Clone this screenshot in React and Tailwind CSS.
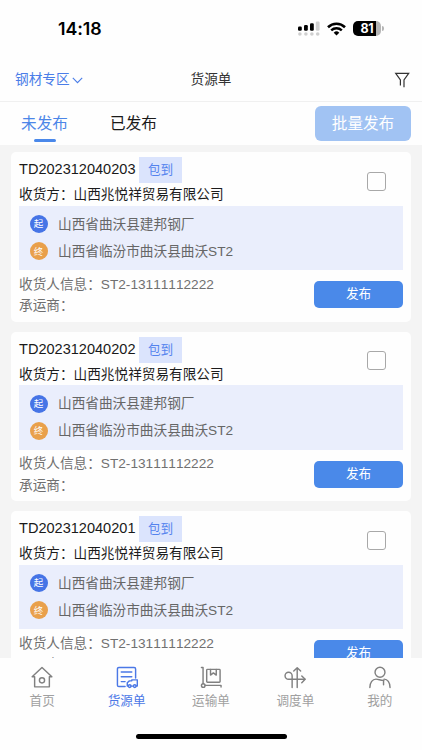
import React, { useState } from "react";

const orders = [
  { id: "TD202312040203" },
  { id: "TD202312040202" },
  { id: "TD202312040201" },
];

function StatusBar() {
  return (
    <div className="h-[58px] shrink-0 flex items-start justify-between pl-[58px] pr-[38px] pt-[20px]">
      <span className="font-['Inter'] font-semibold text-[17.8px] leading-[18px] tracking-[-0.1px] text-black">
        14:18
      </span>
      <div className="flex items-center h-[17px]">
        <svg width="22" height="15" viewBox="0 0 22 15">
          <g fill="#000">
            <rect x="0" y="5.5" width="3.8" height="4.3" rx="1.2" />
            <rect x="6" y="4" width="3.8" height="5.8" rx="1.2" />
            <rect x="12" y="2.2" width="3.8" height="7.6" rx="1.2" />
          </g>
          <g fill="#cfcfcf">
            <rect x="17.8" y="0.6" width="3.8" height="9.2" rx="1.2" />
            <circle cx="1.9" cy="13" r="1.8" />
            <circle cx="7.9" cy="13" r="1.8" />
            <circle cx="13.9" cy="13" r="1.8" />
            <circle cx="19.7" cy="13" r="1.8" />
          </g>
        </svg>
        <svg className="ml-[7px]" width="19" height="14" viewBox="0 0 19 14" fill="none" stroke="#000">
          <path d="M1 5.2a12.2 12.2 0 0 1 17 0" strokeWidth="2.6" />
          <path d="M4.2 8.4a7.6 7.6 0 0 1 10.6 0" strokeWidth="2.4" />
          <path d="M9.5 13.6 6.7 10.7a4 4 0 0 1 5.6 0z" fill="#000" stroke="none" />
        </svg>
        <div className="ml-[7px] w-[28px] h-[15px] rounded-[5px] bg-[linear-gradient(to_right,#000_83%,#b5b5b5_83%)] text-white font-['Inter'] font-bold text-[12.5px] leading-[15px] tracking-[-0.3px] text-center">
          81
        </div>
        <div className="ml-[1px] w-[2px] h-[5px] rounded-r-full bg-[#b5b5b5]" />
      </div>
    </div>
  );
}

function Header() {
  return (
    <div className="h-[44px] shrink-0 grid grid-cols-3 items-center border-b border-[#f0f0f0] pl-[12px] pr-[12px] text-[13.65px]">
      <div className="flex items-center pl-[3px] pt-[2px] text-[#4a7de8]">
        钢材专区
        <svg className="ml-[2px]" width="11" height="7" viewBox="0 0 11 7" fill="none" stroke="currentColor" strokeWidth="1.1">
          <path d="M0.8 0.8 5.5 5.6 10.2 0.8" />
        </svg>
      </div>
      <div className="text-center pt-[2px] text-[#333]">货源单</div>
      <svg className="justify-self-end" width="16" height="16" viewBox="0 0 16 16" fill="none" stroke="#333" strokeWidth="1.2">
        <path d="M6.4 13.6V8L1.700 1.300h13L10 8v7.300" />
      </svg>
    </div>
  );
}

function Tabs({ active, onChange }) {
  return (
    <div className="h-[43px] shrink-0 flex items-center justify-between pr-[11px]">
      <div className="flex h-full">
        {["未发布", "已发布"].map((name, index) => (
          <button
            key={name}
            onClick={() => onChange(index)}
            className={`w-[89px] h-full flex flex-col items-center text-[15.6px] leading-[24px] pt-[10px] ${
              active === index ? "text-[#4c86e8]" : "text-[#1a1a1a]"
            }`}
          >
            {name}
            {active === index && (
              <span className="mt-[3px] w-[22px] h-[3px] rounded-full bg-[#4a88ea]" />
            )}
          </button>
        ))}
      </div>
      <button className="w-[96px] h-[35px] rounded-[6px] bg-[#a1c3f3] pt-[1px] text-white text-[15.6px]">
        批量发布
      </button>
    </div>
  );
}

function Place({ mark, name, color }) {
  return (
    <div className="flex items-center h-[27.3px]">
      <span
        className={`w-[18px] h-[18px] rounded-full flex items-center justify-center text-white text-[9.5px] leading-none ${color}`}
      >
        {mark}
      </span>
      <span className="ml-[10.5px] pt-[1.5px]">{name}</span>
    </div>
  );
}

function OrderCard({ order }) {
  return (
    <div className="h-[169.5px] shrink-0 rounded-[5px] bg-[#fefefe] px-[8px] pt-[5px] text-[13.65px]">
      <div className="flex justify-between pr-[17.5px] h-[48.5px]">
        <div>
          <div className="flex items-start">
            <span className="w-[120px] text-[14.55px] leading-[24px] text-[#1a1a1a]">{order.id}</span>
            <span className="w-[43px] h-[26px] bg-[#dbe4fd] text-[#5583ee] text-[12.6px] leading-[27px] text-center">
              包到
            </span>
          </div>
          <div className="leading-[24px] text-[#1c1c1c]">收货方：山西兆悦祥贸易有限公司</div>
        </div>
        <span className="mt-[14.5px] w-[19px] h-[19px] rounded-[3px] border border-[#a8a8a8]" />
      </div>
      <div className="h-[64.5px] bg-[#eaeefc] pl-[10.5px] pt-[5px] text-[#666]">
        <Place mark="起" name="山西省曲沃县建邦钢厂" color="bg-[#4674e6]" />
        <Place mark="终" name="山西省临汾市曲沃县曲沃ST2" color="bg-[#e9a04b]" />
      </div>
      <div className="flex justify-between text-[#707070]">
        <div className="pt-[3.5px] leading-[21.6px]">
          <div>收货人信息：ST2-13111112222</div>
          <div>承运商：</div>
        </div>
        <button className="mt-[11px] w-[89px] h-[27px] rounded-[5px] bg-[#4a89e9] text-white text-[12.6px]">
          发布
        </button>
      </div>
    </div>
  );
}

const navItems = [
  {
    name: "首页",
    icon: (
      <>
        <path d="M1.2 11.2 11.500 1.500l10.300 9.700h-2.600V21.800H3.800V11.200z" />
        <circle cx="11.500" cy="15" r="2.700" />
      </>
    ),
  },
  {
    name: "货源单",
    active: true,
    icon: (
      <>
        <path d="M9.500 21.500H3a1.500 1.500 0 0 1-1.500-1.500V3A1.500 1.500 0 0 1 3 1.500h16A1.500 1.500 0 0 1 20.500 3v9.500" />
        <path d="M5.500 6.300h11M5.500 11.300h11M5.500 16.300h4" />
        <path d="M12.800 20.800h-1v-3.300l2.200-2h2.500V14.500h5.800v6.300h-1M15.800 21h2.200" />
        <circle cx="14.300" cy="21" r="1.400" />
        <circle cx="19.600" cy="21" r="1.400" />
      </>
    ),
  },
  {
    name: "运输单",
    icon: (
      <>
        <path d="M1.500 1.500H3.200V18.500" />
        <circle cx="3.400" cy="20.400" r="1.900" />
        <path d="M5.300 20.200H22v1.800" />
        <rect x="7" y="3.500" width="14" height="13.500" rx="0.800" />
        <path d="M11 3.500v6l3-2.300 3 2.300v-6" />
      </>
    ),
  },
  {
    name: "调度单",
    icon: (
      <>
        <path d="M8.500 22.500V10.200A3.700 3.700 0 1 0 4.800 13.900H21.800" />
        <path d="M18.600 10.400 22.100 13.900 18.600 17.400" />
        <path d="M13.800 22.500V2M10.200 5.300 13.800 1.800l3.600 3.500" />
      </>
    ),
  },
  {
    name: "我的",
    icon: (
      <>
        <circle cx="11.500" cy="6.500" r="5.200" />
        <path d="M0.900 22.500C0.900 17 3.800 13.700 7.300 13.700c2.900 0 4.200 1.300 7.900 1.300M22 22.500C22 17 19.300 13.700 15.800 13.700" />
        <path d="M15.200 15v4.500" />
      </>
    ),
  },
];

function BottomNav() {
  return (
    <div className="h-[92px] shrink-0 flex flex-col items-center justify-between bg-[#fefefe] pb-[11px]">
      <div className="w-full grid grid-cols-5">
        {navItems.map((item) => (
          <div
            key={item.name}
            className={`flex flex-col items-center pt-[7.5px] ${
              item.active ? "text-[#4b78e6]" : "text-[#808080]"
            }`}
          >
            <svg
              width="22"
              height="23"
              viewBox="0 0 23 24"
              fill="none"
              stroke="currentColor"
              strokeWidth="1.5"
              strokeLinecap="round"
              strokeLinejoin="round"
            >
              {item.icon}
            </svg>
            <span
              className={`mt-[3px] text-[12.6px] leading-[18px] ${
                item.active ? "" : "text-[#a0a0a0]"
              }`}
            >
              {item.name}
            </span>
          </div>
        ))}
      </div>
      <div className="w-[151px] h-[5px] rounded-full bg-black" />
    </div>
  );
}

export default function App() {
  const [active, setActive] = useState(0);

  return (
    <div className="w-[422px] h-[750px] overflow-hidden flex flex-col bg-[#fefefe] font-['Liberation_Sans','Noto_Sans_CJK_SC',sans-serif] [font-kerning:none]">
      <StatusBar />
      <Header />
      <Tabs active={active} onChange={setActive} />
      {/* List */}
      <div className="flex-1 min-h-0 overflow-hidden flex flex-col gap-[10px] bg-[#f4f4f4] px-[11px] pt-[7px]">
        {orders.map((order) => (
          <OrderCard key={order.id} order={order} />
        ))}
      </div>
      <BottomNav />
    </div>
  );
}
